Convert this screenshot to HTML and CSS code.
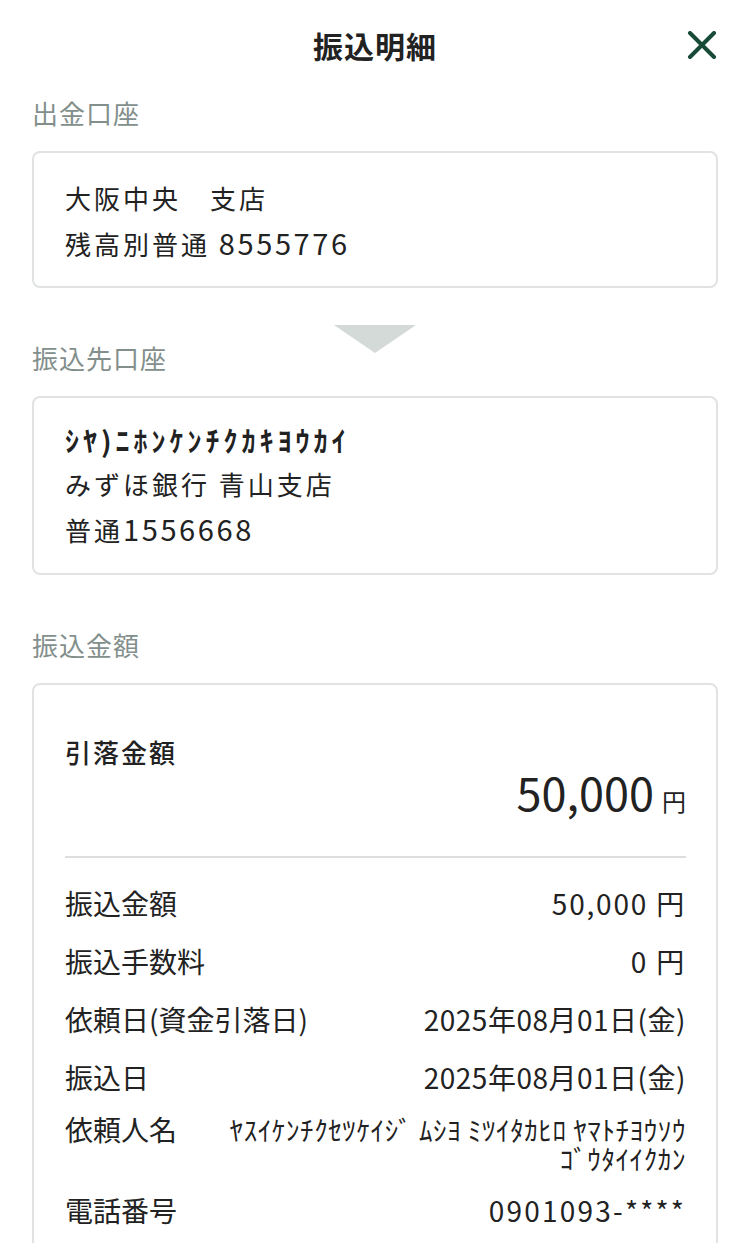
FILE: index.html
```html
<!DOCTYPE html>
<html lang="ja">
<head>
<meta charset="utf-8">
<title>振込明細</title>
<link rel="stylesheet" href="styles.css">
</head>
<body>
<div class="sheet">
  <header class="header">
    <h1 class="title">振込明細</h1>
    <button class="close" aria-label="閉じる">
      <svg width="30" height="28" viewBox="0 0 30 28"><path d="M3 2 L27 26 M27 2 L3 26" stroke="#174a37" stroke-width="4" stroke-linecap="round" fill="none"/></svg>
    </button>
  </header>

  <div class="label-row first"><div class="label">出金口座</div></div>
  <div class="card src">
    <div class="line">大阪中央　支店</div>
    <div class="line">残高別普通 <span class="num">8555776</span></div>
  </div>

  <div class="label-row spaced">
    <div class="arrow"></div>
    <div class="label">振込先口座</div>
  </div>
  <div class="card dst">
    <div class="line kana-bold">ｼﾔ)ﾆﾎﾝｹﾝﾁｸｶｷﾖｳｶｲ</div>
    <div class="line">みずほ銀行 青山支店</div>
    <div class="line">普通<span class="num">1556668</span></div>
  </div>

  <div class="label-row spaced"><div class="label">振込金額</div></div>
  <div class="card amt">
    <div class="amt-title">引落金額</div>
    <div class="amt-total"><span class="big">50,000</span><span class="yen">円</span></div>
    <div class="divider"></div>
    <div class="row"><span class="k">振込金額</span><span class="v wide">50,000 円</span></div>
    <div class="row"><span class="k">振込手数料</span><span class="v wide">0 円</span></div>
    <div class="row"><span class="k">依頼日(資金引落日)</span><span class="v date">2025年08月01日(金)</span></div>
    <div class="row"><span class="k">振込日</span><span class="v date">2025年08月01日(金)</span></div>
    <div class="row name"><span class="k">依頼人名</span><span class="v kana"><span class="kl">ﾔｽｲｹﾝﾁｸｾﾂｹｲｼﾞ ﾑｼﾖ ﾐﾂｲﾀｶﾋﾛ ﾔﾏﾄﾁﾖｳｿｳ</span><span class="kl">ｺﾞｳﾀｲｲｸｶﾝ</span></span></div>
    <div class="row"><span class="k">電話番号</span><span class="v phone">0901093-****</span></div>
  </div>
</div>
</body>
</html>
```

FILE: styles.css
```css
* { box-sizing: border-box; }
body {
  margin: 0;
  background: #ffffff;
  color: #222222;
  font-family: "Noto Sans CJK JP", "Noto Sans", sans-serif;
}
.sheet { padding: 0 32px; }
.header {
  display: grid;
  grid-template-columns: 1fr auto 1fr;
  align-items: center;
  height: 90px;
}
.title {
  grid-column: 2;
  margin: 0;
  font-size: 30px;
  font-weight: 700;
  letter-spacing: 1px;
  color: #222;
}
.close {
  grid-column: 3;
  justify-self: end;
  border: 0;
  background: none;
  padding: 0;
  width: 30px;
  height: 28px;
  margin-right: 1px;
  margin-top: -1px;
}
.close svg { display: block; }
.label-row { position: relative; margin-bottom: 19px; }
.label-row.first { margin-top: 4px; }
.label-row.spaced { margin-top: 51px; }
.label {
  font-size: 26px;
  line-height: 38px;
  color: #838f8c;
  letter-spacing: 1px;
}
.arrow {
  position: absolute;
  top: -14px;
  left: 50%;
  transform: translateX(-50%);
  width: 0;
  height: 0;
  border-left: 41px solid transparent;
  border-right: 41px solid transparent;
  border-top: 28px solid #d3dad8;
}
.card {
  border: 2px solid #e0e3e2;
  border-radius: 8px;
  background: #fff;
  padding-left: 31px;
  padding-right: 30px;
}
.src { padding-top: 22px; padding-bottom: 21px; }
.src .line { font-size: 26px; height: 45px; line-height: 45px; letter-spacing: 3px; }
.dst { padding-top: 20px; padding-bottom: 23px; }
.dst .line { font-size: 26px; height: 44px; line-height: 44px; letter-spacing: 3px; }
.dst .kana-bold { font-size: 28px; font-weight: 700; letter-spacing: 4px; }
.num { font-size: 29px; letter-spacing: 2.6px; }
.amt { padding-top: 47px; padding-bottom: 40px; border-bottom-left-radius: 0; border-bottom-right-radius: 0; }
.amt-title { font-size: 26px; line-height: 40px; height: 40px; font-weight: 500; letter-spacing: 2px; }
.amt-total {
  display: flex;
  justify-content: flex-end;
  align-items: baseline;
  height: 50px;
  margin-top: -5px;
}
.amt-total .big { font-size: 45px; line-height: 50px; }
.amt-total .yen { font-size: 24px; line-height: 50px; margin-left: 8px; }
.divider { height: 2px; background: #dcdedd; margin-top: 39px; margin-bottom: 25px; }
.row {
  display: flex;
  justify-content: space-between;
  align-items: flex-start;
  font-size: 28px;
  line-height: 40px;
  margin-bottom: 18px;
}
.row .k { flex-shrink: 0; }
.row .v { text-align: right; }
.row .v.wide { letter-spacing: 1.8px; }
.row .v.date { letter-spacing: 0.5px; }
.row .v.phone { letter-spacing: 2.2px; }
.row .v.kana {
  display: flex;
  flex-direction: column;
  align-items: flex-end;
  font-size: 27px;
  letter-spacing: 0.6px;
}
.row .v.kana .kl { display: block; height: 29px; line-height: 29px; white-space: nowrap; }
.row.name { line-height: 29px; margin-bottom: 17px; }
```
